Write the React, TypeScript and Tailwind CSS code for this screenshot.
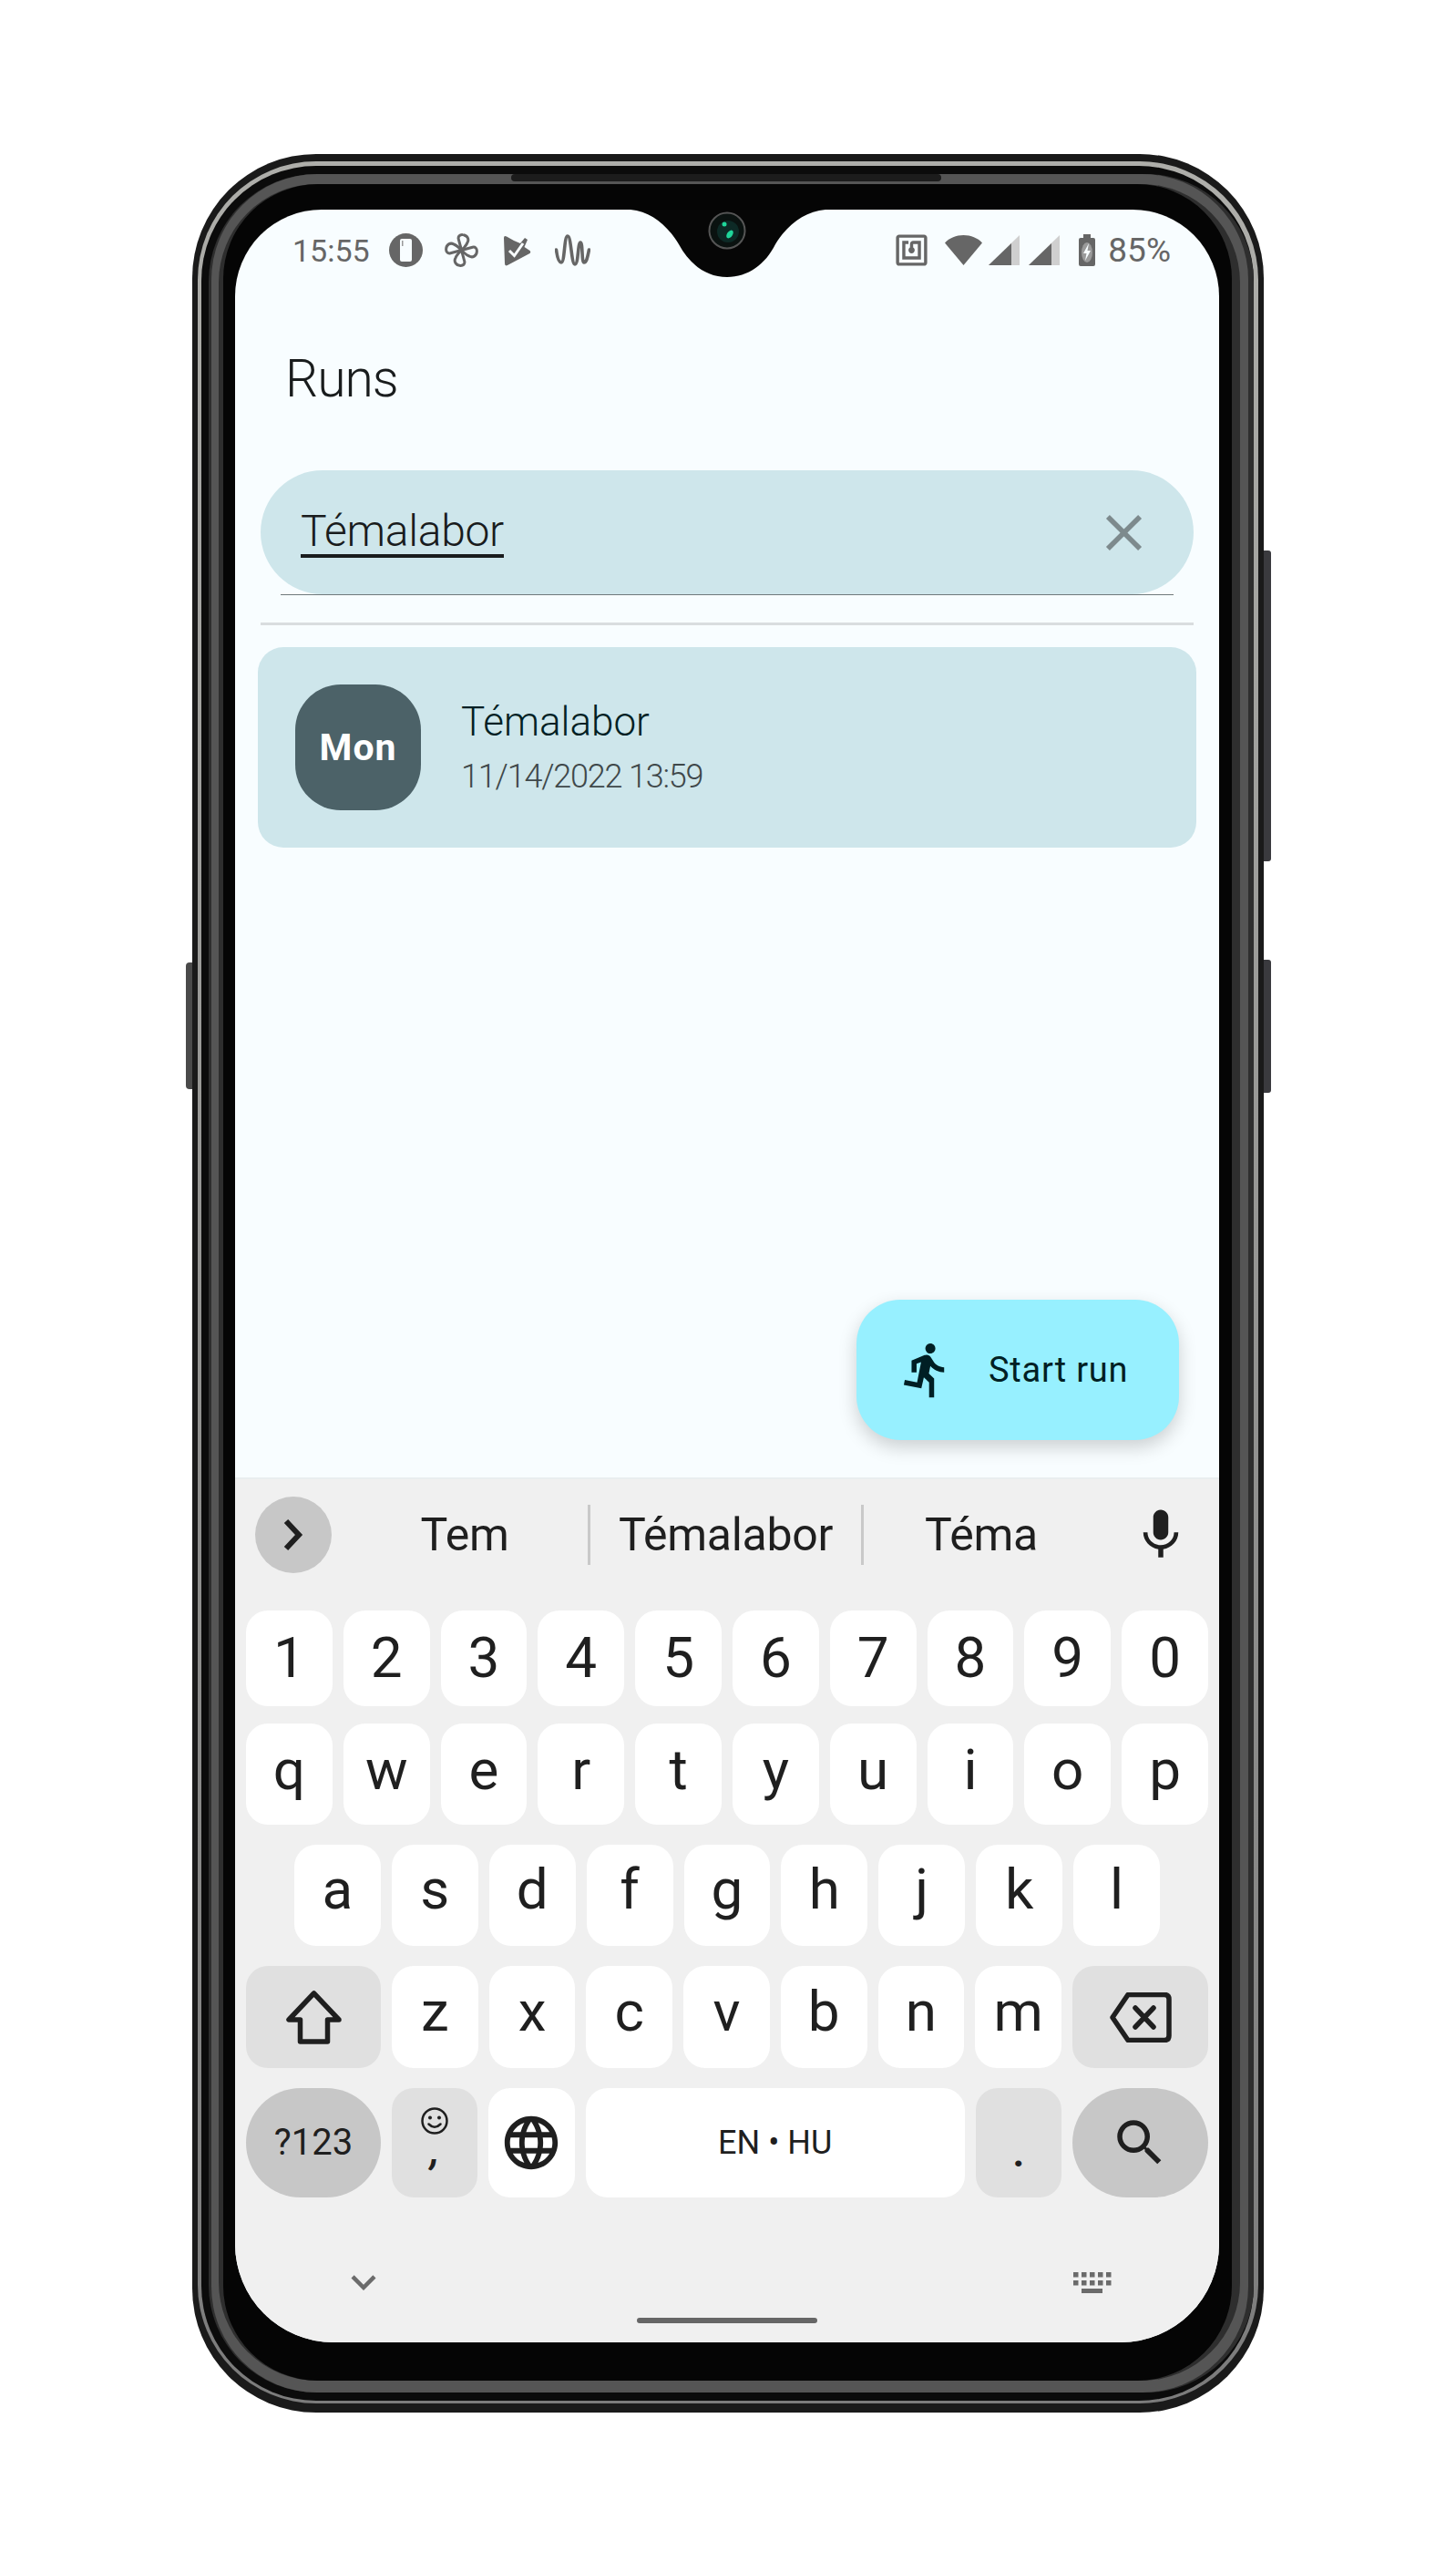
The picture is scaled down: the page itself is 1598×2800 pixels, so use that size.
import {
  MdClose,
  MdDirectionsRun,
  MdKeyboardArrowDown,
  MdLanguage,
  MdMic,
  MdNfc,
  MdSearch,
} from 'react-icons/md';

const ROW_1 = ['1', '2', '3', '4', '5', '6', '7', '8', '9', '0'];
const ROW_2 = ['q', 'w', 'e', 'r', 't', 'y', 'u', 'i', 'o', 'p'];
const ROW_3 = ['a', 's', 'd', 'f', 'g', 'h', 'j', 'k', 'l'];
const ROW_4 = ['z', 'x', 'c', 'v', 'b', 'n', 'm'];

const SignalIcon = () => (
  <svg width="34" height="33" viewBox="0 0 34 33">
    <path d="M0 33 34 0v33Z" fill="#cfcfcf" />
    <path d="M0 33 25 9v24Z" fill="#666" />
  </svg>
);

const StatusBar = () => (
  <div className="mt-[26px] flex h-[37px] items-center justify-between pl-[63px] pr-[53px] leading-none text-[#666]">
    <div className="flex items-center text-[34px]">
      <span>15:55</span>
      <svg className="ml-[21px]" width="37" height="37" viewBox="0 0 37 37">
        <circle cx="18.5" cy="18.5" r="18.5" fill="#666" />
        <rect x="12" y="6" width="13" height="25" rx="2" fill="#f8fdff" />
        <rect x="14" y="8" width="1.500" height="6" fill="#999" />
      </svg>
      <svg className="ml-6" width="37" height="37" viewBox="0 0 37 37" fill="none" stroke="#666" strokeWidth="3" strokeLinejoin="round">
        {[-15, 75, 165, 255].map((deg) => (
          <path
            key={deg}
            d="M18.500 18.500V6C18.500 3 21 1.500 24 2.500C29 4 30 9 27 12C25 15 21 17 18.500 18.500Z"
            transform={`rotate(${deg} 18.500 18.500)`}
          />
        ))}
      </svg>
      <svg className="ml-7" width="30" height="34" viewBox="0 0 30 34">
        <path d="M0 3Q0 0 3 1.500L11 6 18 9 23 3 26 5 22.500 13 28.500 17Q30 18.500 28.500 20L4 33Q1 34.500 1 31Z" fill="#666" />
        <path d="M6 17 11.500 22.500 21 9" fill="none" stroke="#f8fdff" strokeWidth="3" />
      </svg>
      <svg className="ml-[26px]" width="39" height="35" viewBox="0 0 39 35" fill="none" stroke="#666" strokeWidth="3.6" strokeLinecap="round">
        <path d="M1.500 17C2.500 25 4 31 7 31C11 31 10 2 14 2C18 2 18 33 22 33C26 33 25 9 28 9C31 9 29 31 32 31C35 31 36 24 37.500 17" />
      </svg>
    </div>
    <div className="flex items-center text-[37px]">
      <MdNfc size={41} color="#666" />
      <svg className="ml-4" width="41" height="33" viewBox="0 0 41 33">
        <path d="M0 8.500C5 3 12.500 0 20.500 0S36 3 41 8.500L20.500 33Z" fill="#666" />
      </svg>
      <div className="ml-[7px]">
        <SignalIcon />
      </div>
      <div className="ml-[10px]">
        <SignalIcon />
      </div>
      <svg className="ml-[21px]" width="18" height="35" viewBox="0 0 18 35">
        <path d="M5 0h8v4h3a2 2 0 0 1 2 2v27a2 2 0 0 1-2 2H2a2 2 0 0 1-2-2V6a2 2 0 0 1 2-2h3Z" fill="#666" />
        <ellipse cx="9" cy="20" rx="6" ry="11" fill="#9a9a9a" />
        <path d="M11 10 5 21h3.500L7 29l6-11H9.500Z" fill="#f8fdff" />
      </svg>
      <span className="ml-[14px]">85%</span>
    </div>
  </div>
);

const Key = ({ label, className = '' }: { label: string; className?: string }) => (
  <div className={`flex items-center justify-center rounded-[24px] bg-white text-[62px] leading-none text-[#1f1f1f] ${className}`}>
    {label}
  </div>
);

const Keyboard = () => (
  <div className="flex h-[949px] flex-col border-t-2 border-[#e9eeef] bg-[#f0f0f0]">
    <div className="mt-[19px] flex h-[84px] items-center pl-[22px] text-[50px] leading-none tracking-[-0.3px] text-[#1f1f1f]">
      <div className="flex h-[84px] w-[84px] items-center justify-center rounded-full bg-[#c7c7c7]">
        <svg width="24" height="36" viewBox="0 0 24 36" fill="none" stroke="#1f1f1f" strokeWidth="6">
          <path d="M4 3 18 18 4 33" />
        </svg>
      </div>
      <div className="ml-[11px] w-[270px] text-center">Tem</div>
      <div className="h-[66px] w-[3px] bg-[#c9c9c9]" />
      <div className="w-[297px] text-center">Témalabor</div>
      <div className="h-[66px] w-[3px] bg-[#c9c9c9]" />
      <div className="w-[258px] text-center">Téma</div>
      <MdMic className="ml-[35px]" size={66} color="#1f1f1f" />
    </div>

    <div className="mt-[41px] flex flex-col px-3">
      <div className="grid h-[105px] grid-cols-10 gap-x-3">
        {ROW_1.map((k) => (
          <Key key={k} label={k} className="pb-[2px]" />
        ))}
      </div>
      <div className="mt-[19px] grid h-[111px] grid-cols-10 gap-x-3">
        {ROW_2.map((k) => (
          <Key key={k} label={k} className="pb-[10px]" />
        ))}
      </div>
      <div className="mt-[22px] grid h-[111px] grid-cols-9 gap-x-3 px-[53px]">
        {ROW_3.map((k) => (
          <Key key={k} label={k} className="pb-[14px]" />
        ))}
      </div>
      <div className="mt-[22px] flex h-[112px] gap-x-3">
        <div className="flex w-[148px] items-center justify-center rounded-[24px] bg-[#e0e0e0]">
          <svg width="61" height="59" viewBox="0 0 61 59" fill="none" stroke="#1f1f1f" strokeWidth="5.500" strokeLinejoin="round">
            <path d="M30.500 3 3 32H15.500V56H45.500V32H58Z" />
          </svg>
        </div>
        {ROW_4.map((k) => (
          <Key key={k} label={k} className="flex-1 pb-3" />
        ))}
        <div className="flex w-[149px] items-center justify-center rounded-[24px] bg-[#e0e0e0]">
          <svg width="68" height="55" viewBox="0 0 68 55" fill="none" stroke="#1f1f1f" strokeWidth="5.500" strokeLinejoin="round" strokeLinecap="round">
            <path d="M3 27.500 20 2.500H60Q65 2.500 65 7.500V47.500Q65 52.500 60 52.500H20Z" />
            <path d="M28 17 48 38M48 17 28 38" />
          </svg>
        </div>
      </div>
      <div className="mt-[22px] flex h-[120px] gap-x-3">
        <div className="flex w-[148px] items-center justify-center rounded-[60px] bg-[#c7c7c7] text-[40px] leading-none text-[#1f1f1f]">
          ?123
        </div>
        <div className="flex flex-1 flex-col items-center rounded-[24px] bg-[#e0e0e0] pt-[20px] text-[#1f1f1f]">
          <svg width="32" height="32" viewBox="0 0 32 32" fill="none" stroke="#1f1f1f" strokeWidth="2.500">
            <circle cx="16" cy="16" r="13.500" />
            <circle cx="11" cy="12.500" r="2" fill="#1f1f1f" stroke="none" />
            <circle cx="21" cy="12.500" r="2" fill="#1f1f1f" stroke="none" />
            <path d="M9.500 19.500Q16 26 22.500 19.500" strokeLinecap="round" />
          </svg>
          <span className="-mt-[4px] text-[42px] leading-none font-bold italic">,</span>
        </div>
        <div className="flex flex-1 items-center justify-center rounded-[24px] bg-white">
          <MdLanguage size={70} color="#1f1f1f" />
        </div>
        <div className="flex w-[416px] items-center justify-center rounded-[24px] bg-white text-[36px] leading-none text-[#1f1f1f]">
          EN • HU
        </div>
        <div className="flex flex-1 items-center justify-center rounded-[24px] bg-[#e0e0e0] pt-[22px] text-[44px] leading-none font-bold text-[#1f1f1f]">
          .
        </div>
        <div className="flex w-[149px] items-center justify-center rounded-[60px] bg-[#c7c7c7]">
          <MdSearch size={66} color="#1f1f1f" />
        </div>
      </div>
    </div>

    <div className="mt-[66px] flex items-center justify-between pl-[114px] pr-[118px]">
      <MdKeyboardArrowDown size={54} color="#6b6b6b" />
      <svg width="42" height="23" viewBox="0 0 42 23" fill="#6b6b6b">
        {[0, 9, 18, 27, 36].map((x) => (
          <g key={x}>
            <rect x={x} y="0" width="5.500" height="5.500" />
            <rect x={x} y="9" width="5.500" height="5.500" />
          </g>
        ))}
        <rect x="9" y="18" width="23" height="5" />
      </svg>
    </div>
    <div className="mx-auto mt-3 h-[6px] w-[198px] rounded-full bg-[#666]" />
  </div>
);

const Screen = () => (
  <div className="relative h-[2340px] w-[1080px] overflow-hidden rounded-t-[95px] rounded-b-[108px] bg-[#f8fdff]">
    <svg className="absolute left-[434px] top-0" width="214" height="74" viewBox="0 0 214 74">
      <path d="M0 0C23 2 41 18 53 38C65 60 83 74 106 74C129 74 148 60 159 38C171 18 190 2 214 0Z" fill="#060606" />
      <circle cx="106" cy="23" r="19.500" fill="#0a1210" stroke="#555" strokeWidth="2" />
      <circle cx="107" cy="24" r="12" fill="#0d2a26" />
      <circle cx="103" cy="16" r="2.500" fill="#1fd69a" />
      <ellipse cx="109" cy="27" rx="3" ry="5" fill="#1fd69a" transform="rotate(35 109 27)" />
    </svg>

    <div className="flex h-[1391px] flex-col">
      <StatusBar />
      <h1 className="ml-[55px] mt-[94px] text-[57px] leading-none font-light tracking-[-1px] text-[#191c1d]">Runs</h1>

      <div className="mx-7 mt-[72px] flex h-[136px] items-center justify-between rounded-full bg-[#cee6eb] pl-11 pr-[43px]">
        <span className="mt-[2px] border-b-4 border-[#191c1d] pb-px text-[48px] leading-none font-light tracking-[-0.3px] text-[#191c1d]">Témalabor</span>
        <MdClose size={67} color="#7d8a8d" />
      </div>
      <div className="mx-[50px] h-px bg-[#6f797b]" />
      <div className="mx-7 mt-[30px] h-[3px] bg-[#d9dddf]" />

      <div className="mx-[25px] mt-[24px] flex h-[220px] items-center rounded-[28px] bg-[#cee6eb] pl-[41px]">
        <div className="flex h-[138px] w-[138px] items-center justify-center rounded-[50px] bg-[#4c6268] text-[41px] leading-none font-bold tracking-[1px] text-white">
          Mon
        </div>
        <div className="ml-[44px] flex flex-col">
          <span className="text-[44px] leading-[52px] font-light text-[#001f24]">Témalabor</span>
          <span className="mt-3 text-[36px] leading-[44px] font-light tracking-[-1.2px] text-[#3f484a]">11/14/2022 13:59</span>
        </div>
      </div>

      <div className="mb-[41px] mr-11 mt-auto flex h-[154px] w-[354px] items-center self-end rounded-[48px] bg-[#97f0ff] pl-[44px] text-[38px] leading-none tracking-[0.8px] text-[#001f24] shadow-[0_8px_20px_rgba(0,0,0,0.18)]">
        <MdDirectionsRun size={66} color="#001f24" />
        <span className="ml-[35px]">Start run</span>
      </div>
    </div>

    <Keyboard />
  </div>
);

export default function App() {
  return (
    <div className="flex min-h-[2800px] justify-center bg-white pt-[169px] font-['Roboto',sans-serif]">
      <div className="relative h-[2478px] w-[1176px]">
        <div className="absolute right-full top-[887px] h-[139px] w-[7px] rounded-l-[4px] bg-[#4a4a4a]" />
        <div className="absolute left-full top-[435px] h-[341px] w-[8px] rounded-r-[3px] bg-[#3a3a3e]" />
        <div className="absolute left-full top-[884px] h-[146px] w-[8px] rounded-r-[3px] bg-[#3a3a3e]" />

        <div className="h-full rounded-[136px] bg-[#1a1a1a] pb-[10px] pl-[6px] pr-[6px] pt-2">
          <div className="h-full rounded-[130px] bg-linear-to-b from-[#aeaeaa] to-[#7c7c7c] pb-[3px] pl-1 pr-[5px] pt-[5px]">
            <div className="h-full rounded-[126px] bg-[#0b0b0b] pb-[9px] pl-2 pt-[9px]">
              <div className="h-full rounded-[118px] bg-[#2e2e2e] pl-[3px] pr-[6px]">
                <div className="h-full rounded-[116px] bg-[#555] pb-[13px] pl-2 pr-[9px] pt-[11px]">
                  <div className="h-full rounded-[108px] bg-[#2e2e2e] pl-[5px] pr-[9px]">
                    <div className="h-full rounded-[104px] bg-[#050505] pb-[42px] pl-[13px] pr-[14px] pt-7">
                      <Screen />
                    </div>
                  </div>
                </div>
              </div>
            </div>
          </div>
        </div>

        <div className="absolute left-[350px] top-[22px] h-[8px] w-[472px] rounded-full bg-[#1c1c1c]" />
      </div>
    </div>
  );
}
